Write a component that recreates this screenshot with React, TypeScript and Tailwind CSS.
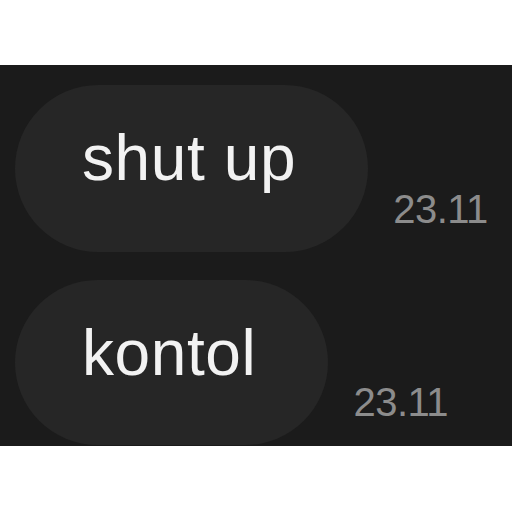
import React from 'react';

interface Message {
    text: string;
    time: string;
    height: string;
}

const messages: Message[] = [
    { text: 'shut up', time: '23.11', height: 'h-[167px]' },
    { text: 'kontol', time: '23.11', height: 'h-[165px]' },
];

const Bubble = ({ text, time, height }: Message) => {
    return (
        <div className="flex items-end pl-[15px]">
            <div className={`${height} rounded-[84px] bg-[#262626] pl-[67px] pr-[72px] pt-[41px]`}>
                <span className="block text-[64px] leading-none tracking-[0.6px] text-[#f2f2f2]">{text}</span>
            </div>
            <span className="ml-[25px] mb-[23px] text-[40px] leading-none tracking-[-0.5px] text-[#8c8c8c]">{time}</span>
        </div>
    );
};

const App = () => {
    return (
        <div className="w-[512px] h-[512px] bg-white flex flex-col" style={{ fontFamily: '"Liberation Sans", Arial, sans-serif' }}>
            <div className="h-[65px] bg-white" />
            <div className="h-[381px] bg-[#1b1b1b] pt-[20px] flex flex-col gap-[28px] overflow-hidden">
                {messages.map((m, i) => (
                    <Bubble key={i} {...m} />
                ))}
            </div>
            <div className="flex-1 bg-white" />
        </div>
    );
};

export default App;
